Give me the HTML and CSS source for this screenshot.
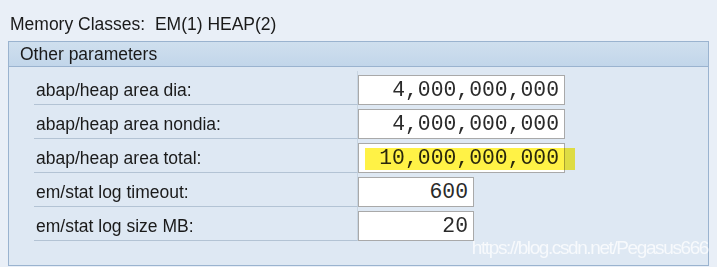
FILE: index.html
```html
<!DOCTYPE html>
<html>
<head>
<meta charset="utf-8">
<link rel="stylesheet" href="styles.css">
</head>
<body>
<div class="title">Memory Classes:&nbsp; EM(1) HEAP(2)</div>
<div class="frame">
  <div class="frame-head">Other parameters</div>
  <div class="rows">
    <div class="label">abap/heap area dia:</div>
    <div class="cell"><div class="field wide">4,000,000,000</div></div>
    <div class="label">abap/heap area nondia:</div>
    <div class="cell"><div class="field wide">4,000,000,000</div></div>
    <div class="label">abap/heap area total:</div>
    <div class="cell"><div class="field wide">10,000,000,000<span class="marker"></span></div></div>
    <div class="label">em/stat log timeout:</div>
    <div class="cell"><div class="field narrow">600</div></div>
    <div class="label">em/stat log size MB:</div>
    <div class="cell"><div class="field narrow">20</div></div>
  </div>
  <div class="watermark">https://blog.csdn.net/Pegasus666</div>
</div>
</body>
</html>
```
FILE: styles.css
```css
html, body {
  margin: 0;
  padding: 0;
}
body {
  width: 717px;
  height: 267px;
  background: #e9eff7;
  font-family: "Liberation Sans", Arial, sans-serif;
  font-size: 17.5px;
  color: #1a1a1a;
  overflow: hidden;
}
.title {
  height: 41px;
  line-height: 49px;
  padding-left: 10px;
  box-sizing: border-box;
}
.frame {
  position: relative;
  margin: 0 8px;
  height: 225px;
  box-sizing: border-box;
  border: 1px solid #9ab3cf;
  background: #dee8f3;
}
.frame-head {
  height: 24px;
  line-height: 25px;
  padding-left: 11px;
  background: linear-gradient(#cfdfee, #c2d6ea);
  border-bottom: 1px solid #9ab3cf;
}
.rows {
  display: grid;
  grid-template-columns: 324px auto;
  grid-auto-rows: 34px;
  padding: 4px 0 0 25px;
}
.label {
  border-bottom: 1px solid #b3c3d4;
  border-right: 1px solid #c8d5e2;
  padding-left: 2px;
  line-height: 38px;
  box-sizing: border-box;
}
.cell {
  padding-top: 4px;
}
.field {
  position: relative;
  height: 30px;
  box-sizing: border-box;
  background: #fff;
  border: 1px solid #a9a9a9;
  font-family: "Liberation Mono", "Courier New", monospace;
  font-size: 21.4px;
  line-height: 29px;
  text-align: right;
  padding-right: 5px;
  color: #2a2a2a;
}
.wide { width: 207px; }
.narrow { width: 116px; }
.marker {
  position: absolute;
  left: 6px;
  top: 4px;
  width: 210px;
  height: 22px;
  background: #fff23c;
  mix-blend-mode: multiply;
  opacity: 0.95;
}
.watermark {
  position: absolute;
  right: 0;
  bottom: 6px;
  font-family: "Liberation Sans", Arial, sans-serif;
  font-size: 19px;
  letter-spacing: -1.4px;
  color: rgba(255, 255, 255, 0.75);
}
```
